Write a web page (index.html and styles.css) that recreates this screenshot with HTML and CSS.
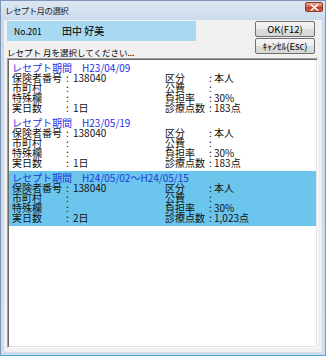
FILE: index.html
```html
<!DOCTYPE html>
<html lang="ja">
<head>
<meta charset="utf-8">
<link rel="stylesheet" href="styles.css">
</head>
<body>
<div class="window">
  <div class="titlebar">
    <span class="title">レセプト月の選択</span>
    <span class="close"><svg width="9" height="7" viewBox="0 0 9 7"><path d="M1.5 1 L7.5 6 M7.5 1 L1.5 6" stroke="#fff" stroke-width="1.6" stroke-linecap="square"/></svg></span>
  </div>
  <div class="client">
    <div class="top">
      <div class="left">
        <div class="patient"><span class="no">No.201</span><span class="name">田中 好美</span></div>
        <div class="prompt">レセプト 月を選択してください...</div>
      </div>
      <div class="buttons">
        <button class="btn">OK(F12)</button>
        <button class="btn">ｷｬﾝｾﾙ(Esc)</button>
      </div>
    </div>
    <div class="list">
      <div class="item">
        <div class="ititle">レセプト期間　H23/04/09</div>
        <div class="fields">
          <span>保険者番号</span><span class="c">:</span><span>138040</span><span>区分</span><span class="c">:</span><span>本人</span>
          <span>市町村</span><span class="c">:</span><span></span><span>公費</span><span class="c">:</span><span></span>
          <span>特殊欄</span><span class="c">:</span><span></span><span>負担率</span><span class="c">:</span><span>30%</span>
          <span>実日数</span><span class="c">:</span><span>1日</span><span>診療点数</span><span class="c">:</span><span>183点</span>
        </div>
      </div>
      <div class="item">
        <div class="ititle">レセプト期間　H23/05/19</div>
        <div class="fields">
          <span>保険者番号</span><span class="c">:</span><span>138040</span><span>区分</span><span class="c">:</span><span>本人</span>
          <span>市町村</span><span class="c">:</span><span></span><span>公費</span><span class="c">:</span><span></span>
          <span>特殊欄</span><span class="c">:</span><span></span><span>負担率</span><span class="c">:</span><span>30%</span>
          <span>実日数</span><span class="c">:</span><span>1日</span><span>診療点数</span><span class="c">:</span><span>183点</span>
        </div>
      </div>
      <div class="item selected">
        <div class="ititle">レセプト期間　H24/05/02～H24/05/15</div>
        <div class="fields">
          <span>保険者番号</span><span class="c">:</span><span>138040</span><span>区分</span><span class="c">:</span><span>本人</span>
          <span>市町村</span><span class="c">:</span><span></span><span>公費</span><span class="c">:</span><span></span>
          <span>特殊欄</span><span class="c">:</span><span></span><span>負担率</span><span class="c">:</span><span>30%</span>
          <span>実日数</span><span class="c">:</span><span>2日</span><span>診療点数</span><span class="c">:</span><span>1,023点</span>
        </div>
      </div>
    </div>
  </div>
</div>
</body>
</html>
```

FILE: styles.css
```css
* { box-sizing: border-box; margin: 0; padding: 0; }
html, body { width: 326px; height: 356px; overflow: hidden; }
body {
  font-family: "Noto Sans CJK JP", "Noto Sans", sans-serif;
  color: #000;
  background: #fff;
}
.window {
  width: 326px;
  height: 356px;
  border: 1px solid #7f97b6;
  border-bottom-color: #4fa3d8;
  background: linear-gradient(#dde7f3, #cad9ec 20px, #cfdcee);
  display: flex;
  flex-direction: column;
  padding: 0 3px 3px 3px;
}
.titlebar {
  height: 19px;
  flex: none;
  display: flex;
  justify-content: space-between;
  align-items: center;
  padding-left: 1px;
}
.title {
  font-size: 8.5px;
  letter-spacing: -0.6px;
  color: #1a1a1a;
  line-height: 10px;
  margin-top: -1px;
}
.close {
  align-self: flex-start;
  margin-top: 1px;
  margin-right: -1px;
  width: 18px;
  height: 10px;
  border: 1px solid #8a3b2e;
  border-radius: 2px;
  background: linear-gradient(#e9aa9a, #d06a55 45%, #c33d27 55%, #d0604a);
  display: flex;
  align-items: center;
  justify-content: center;
}
.close svg { display: block; }
.client {
  flex: 1;
  background: #f0f0f0;
  padding: 1px 4px 4px 3px;
  display: flex;
  flex-direction: column;
}
.top {
  height: 37px;
  flex: none;
  display: flex;
  justify-content: space-between;
}
.left {
  width: 189px;
  display: flex;
  flex-direction: column;
}
.patient {
  height: 20px;
  background: #a8d9f3;
  display: flex;
  align-items: center;
  padding-left: 7px;
}
.no { font-size: 8.5px; width: 48px; line-height: 10px; }
.name { font-size: 10px; line-height: 12px; }
.prompt {
  font-size: 8.5px;
  line-height: 10px;
  padding-top: 6px;
}
.buttons {
  width: 60px;
  margin-right: 3px;
  display: flex;
  flex-direction: column;
  gap: 1px;
}
.btn {
  height: 16px;
  border: 1px solid #707070;
  border-radius: 2px;
  background: linear-gradient(#f5f5f5, #ececec 50%, #dddddd 50%, #d6d6d6);
  font-family: inherit;
  font-size: 9.5px;
  line-height: 10px;
  color: #000;
  display: flex;
  align-items: center;
  justify-content: center;
}
.list {
  flex: 1;
  background: #fff;
  border: 1px solid;
  border-color: #a0a0a0 #ffffff #ffffff #a0a0a0;
  box-shadow: inset 1px 1px 0 #696969, inset -1px -1px 0 #e3e3e3;
  padding: 2px 1px 1px 1px;
}
.item {
  padding: 2px 0 3px 3px;
  font-size: 10px;
  line-height: 10px;
  color: #111;
}
.item.selected { background: #6cc5ec; }
.ititle { color: #2b2be6; }
.selected .ititle { color: #1d38d8; }
.fields {
  display: grid;
  grid-template-columns: 53px 8px 92px 43px 6px 1fr;
  grid-auto-rows: 10px;
}
.fields span { white-space: nowrap; }
.fields .c { padding-left: 1px; }
```
